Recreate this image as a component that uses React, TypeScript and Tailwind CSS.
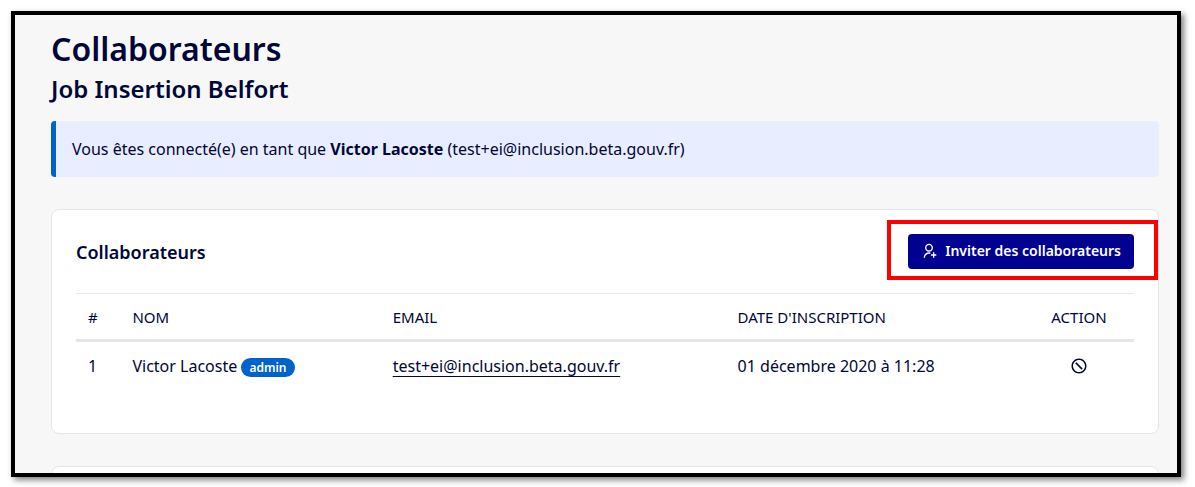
import { RiForbidLine, RiUserAddLine } from "react-icons/ri"

interface Member {
  id: number
  name: string
  email: string
  joinedAt: string
  isAdmin: boolean
}

const members: Member[] = [
  {
    id: 1,
    name: "Victor Lacoste",
    email: "test+ei@inclusion.beta.gouv.fr",
    joinedAt: "01 décembre 2020 à 11:28",
    isAdmin: true,
  },
]

function PageHeader() {
  return (
    <header>
      <h1 className="text-[32px] leading-10 font-semibold">Collaborateurs</h1>
      <h2 className="text-2xl leading-10 font-semibold">Job Insertion Belfort</h2>
    </header>
  )
}

function ConnectedAs({ name, email }: { name: string; email: string }) {
  return (
    <div role="status" className="mt-3 rounded border-l-[5px] border-[#0063cb] bg-[#e8edff] p-4 leading-6">
      Vous êtes connecté(e) en tant que <strong className="font-bold">{name}</strong> ({email})
    </div>
  )
}

function MembersTable() {
  return (
    <table className="mt-6 w-full table-fixed border-collapse text-left">
      <thead>
        <tr className="h-[47px] border-t border-b-3 border-[#e5e5ea] text-[15px] leading-5 uppercase">
          <th className="w-[4.2%] px-3 font-normal">#</th>
          <th className="w-[24.6%] px-3 font-normal">Nom</th>
          <th className="w-[32.6%] px-3 font-normal">Email</th>
          <th className="w-[28.2%] px-3 font-normal">Date d'inscription</th>
          <th className="px-3 text-center font-normal">Action</th>
        </tr>
      </thead>
      <tbody>
        {members.map((member) => (
          <tr key={member.id} className="h-[50px]">
            <td className="px-3">{member.id}</td>
            <td className="px-3 whitespace-nowrap">
              {member.name}{" "}
              {member.isAdmin && (
                <span className="inline-block rounded-full bg-[#0063cb] px-2 text-xs leading-[19px] font-semibold text-white">
                  admin
                </span>
              )}
            </td>
            <td className="px-3">
              <a href={`mailto:${member.email}`} className="underline underline-offset-4">
                {member.email}
              </a>
            </td>
            <td className="px-3">{member.joinedAt}</td>
            <td className="px-3">
              <button type="button" aria-label={`Désactiver ${member.name}`} className="mx-auto block">
                <RiForbidLine className="size-[18px]" />
              </button>
            </td>
          </tr>
        ))}
      </tbody>
    </table>
  )
}

export default function App() {
  return (
    <div className="h-screen bg-white pt-[11px] pr-[14px] pb-[10px] pl-[11px] font-['Noto_Sans',sans-serif] text-[#000638]">
      <main className="h-full overflow-hidden border-4 border-black bg-[#f7f7f7] pt-[14px] pr-[18px] pl-9 shadow-[3px_3px_6px_rgba(0,0,0,0.5)]">
        <PageHeader />
        <ConnectedAs name="Victor Lacoste" email="test+ei@inclusion.beta.gouv.fr" />

        <section className="mt-8 rounded-lg border border-[#e5e5e5] bg-white px-6 pt-6 pb-[42px]">
          <div className="flex items-center justify-between">
            <h3 className="text-lg leading-6 font-semibold">Collaborateurs</h3>
            <div className="relative">
              <button
                type="button"
                className="flex h-[35px] items-center gap-2 rounded bg-[#000091] px-[13px] pb-px text-sm font-semibold text-white"
              >
                <RiUserAddLine className="size-4" />
                Inviter des collaborateurs
              </button>
              {/* highlight around the invite button */}
              <div className="pointer-events-none absolute -top-[14px] -right-6 -bottom-[11px] -left-[21px] border-4 border-[#ff0000]" />
            </div>
          </div>
          <MembersTable />
        </section>

        <section className="mt-8 h-20 rounded-lg border border-[#e5e5e5] bg-white" />
      </main>
    </div>
  )
}
